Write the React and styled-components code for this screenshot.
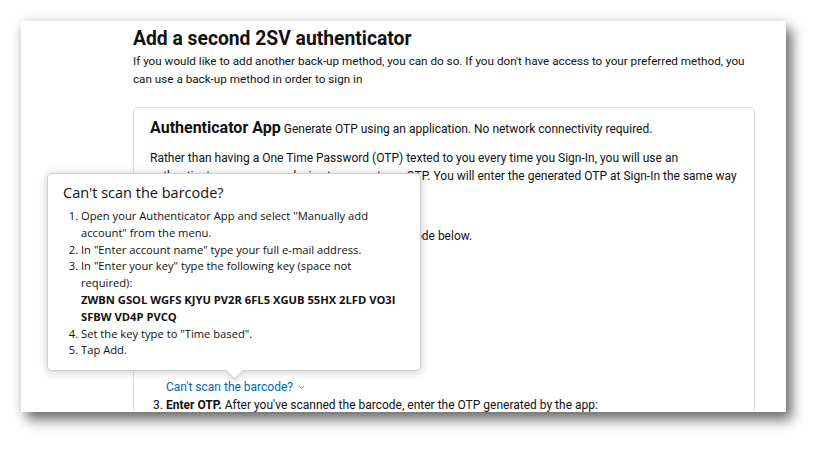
import React from 'react';
import styled, { createGlobalStyle } from 'styled-components';

const GlobalStyle = createGlobalStyle`
  html, body {
    margin: 0;
    padding: 0;
    background: #ffffff;
  }
  * {
    box-sizing: border-box;
  }
`;

const Stage = styled.div`
  width: 828px;
  height: 454px;
  padding: 21px 0 0 21px;
  overflow: hidden;
`;

const Sheet = styled.div`
  position: relative;
  width: 765px;
  height: 391px;
  background: #ffffff;
  overflow: hidden;
  padding: 6px 31px 0 112px;
  box-shadow: 6px 8px 12px rgba(0, 0, 0, 0.55), 0 0 10px rgba(0, 0, 0, 0.12);
  font-family: Roboto, "Liberation Sans", sans-serif;
  color: #111111;
`;

const Title = styled.h1`
  margin: 0;
  font-size: 19.3px;
  line-height: 23px;
  font-weight: 700;
`;

const Intro = styled.p`
  margin: 2px 0 0;
  font-size: 11.7px;
  line-height: 18px;
`;

const Card = styled.section`
  margin-top: 19px;
  border: 1px solid #dddddd;
  border-radius: 5px;
  padding: 10px 16px 20px;
`;

const CardHead = styled.div`
  line-height: 20px;
  font-size: 12px;
`;

const CardName = styled.span`
  font-size: 16px;
  font-weight: 700;
  margin-right: 3px;
`;

const Body = styled.p`
  margin: 10px 0 0;
  font-size: 12px;
  line-height: 18px;
`;

const Steps = styled.ol`
  margin: 6px 0 0;
  padding-left: 16px;
  font-size: 12px;
  line-height: 18px;
`;

const QrBox = styled.svg`
  display: block;
  width: 108px;
  height: 108px;
  margin: 8px 0 17px;
`;

const HelpLink = styled.a`
  display: inline-flex;
  align-items: center;
  gap: 5px;
  color: #0066c0;
  text-decoration: none;
  cursor: pointer;
`;

const Popover = styled.div`
  position: absolute;
  left: 26px;
  top: 152px;
  width: 374px;
  padding: 9px 16px 11px 15px;
  background: #ffffff;
  border: 1px solid #cfcfcf;
  border-radius: 4px;
  box-shadow: 0 1px 10px rgba(0, 0, 0, 0.22);
  font-family: "Open Sans", "Noto Sans", sans-serif;
  color: #111111;

  &::after {
    content: '';
    position: absolute;
    left: 180px;
    bottom: -7px;
    width: 12px;
    height: 12px;
    background: #ffffff;
    border-right: 1px solid #cfcfcf;
    border-bottom: 1px solid #cfcfcf;
    transform: rotate(45deg);
    box-shadow: 3px 3px 5px rgba(0, 0, 0, 0.08);
  }
`;

const PopTitle = styled.h4`
  margin: 0;
  font-size: 14.5px;
  line-height: 20px;
  font-weight: 400;
`;

const PopList = styled.ol`
  margin: 5px 0 0;
  padding-left: 18px;
  font-size: 11.2px;
  line-height: 16.8px;
`;

const Key = styled.strong`
  display: block;
  font-weight: 700;
`;

const Chevron = () => (
  <svg width="7" height="5" viewBox="0 0 7 5" fill="none">
    <path d="M1 1l2.5 2.5L6 1" stroke="#8a8a8a" strokeWidth="1" />
  </svg>
);

const QR_CELLS = [
  '1111111010110111111',
  '1000001011001000001',
  '1011101001101011101',
  '1011101110011011101',
  '1011101010101011101',
  '1000001001011000001',
  '1111111010101111111',
  '0000000011100000000',
  '1101011100110101101',
  '0110100101011010010',
  '1011011010101101101',
  '0000000010011010100',
  '1111111001101011011',
  '1000001011010100110',
  '1011101000111011001',
  '1011101101001101110',
  '1011101010110010101',
  '1000001001101101011',
  '1111111010011010110',
];

const Qr = () => (
  <QrBox viewBox="0 0 19 19">
    {QR_CELLS.map((row, y) =>
      row.split('').map((c, x) => (c === '1' ? <rect key={`${x}-${y}`} x={x} y={y} width="1" height="1" fill="#000" /> : null)),
    )}
  </QrBox>
);

const App = () => (
  <>
    <GlobalStyle />
    <Stage>
      <Sheet>
        <Title>Add a second 2SV authenticator</Title>
        <Intro>
          If you would like to add another back-up method, you can do so. If you don&apos;t have access to your preferred method, you
          can use a back-up method in order to sign in
        </Intro>

        <Card>
          <CardHead>
            <CardName>Authenticator App</CardName>
            Generate OTP using an application. No network connectivity required.
          </CardHead>
          <Body>
            Rather than having a One Time Password (OTP) texted to you every time you Sign-In, you will use an
            authenticator app on your device to generate an OTP. You will enter the generated OTP at Sign-In the same way
            as you would with a texted OTP.
          </Body>
          <Steps>
            <li>Install an authenticator app on your phone.</li>
            <li>
              Open your authenticator app and scan the barcode below.
              <Qr />
              <HelpLink>
                Can&apos;t scan the barcode?
                <Chevron />
              </HelpLink>
            </li>
            <li>
              <strong>Enter OTP.</strong> After you&apos;ve scanned the barcode, enter the OTP generated by the app:
            </li>
          </Steps>
        </Card>

        <Popover>
          <PopTitle>Can&apos;t scan the barcode?</PopTitle>
          <PopList>
            <li>Open your Authenticator App and select &quot;Manually add account&quot; from the menu.</li>
            <li>In &quot;Enter account name&quot; type your full e-mail address.</li>
            <li>
              In &quot;Enter your key&quot; type the following key (space not required):
              <Key>ZWBN GSOL WGFS KJYU PV2R 6FL5 XGUB 55HX 2LFD VO3I SFBW VD4P PVCQ</Key>
            </li>
            <li>Set the key type to &quot;Time based&quot;.</li>
            <li>Tap Add.</li>
          </PopList>
        </Popover>
      </Sheet>
    </Stage>
  </>
);

export default App;
